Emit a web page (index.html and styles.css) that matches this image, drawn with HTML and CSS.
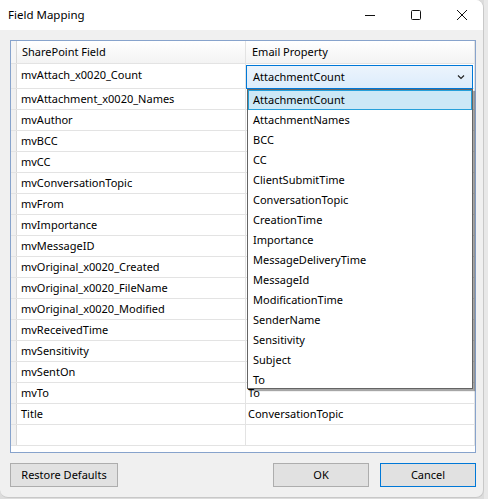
FILE: index.html
```html
<!DOCTYPE html>
<html>
<head>
<meta charset="utf-8">
<link rel="stylesheet" href="styles.css">
</head>
<body>
<div class="screen">
  <div class="window">
    <div class="titlebar">
      <div class="title">Field Mapping</div>
      <div class="controls">
        <span class="ctl"><svg width="12" height="12" viewBox="0 0 12 12"><path d="M1 6.5H11" stroke="#111" stroke-width="1"/></svg></span>
        <span class="ctl"><svg width="12" height="12" viewBox="0 0 12 12"><rect x="1.5" y="1.5" width="9" height="9" rx="1" fill="none" stroke="#111" stroke-width="1"/></svg></span>
        <span class="ctl"><svg width="12" height="12" viewBox="0 0 12 12"><path d="M1 1L11 11M11 1L1 11" stroke="#111" stroke-width="1"/></svg></span>
      </div>
    </div>
    <div class="content">
      <div class="grid">
        <div class="row header">
          <div class="rh"></div>
          <div class="c1">SharePoint Field</div>
          <div class="c2">Email Property</div>
        </div>
        <div class="row first">
          <div class="rh"></div>
          <div class="c1">mvAttach_x0020_Count</div>
          <div class="c2 combo-cell">
            <div class="combo">
              <span>AttachmentCount</span>
              <svg width="8" height="6" viewBox="0 0 8 6"><path d="M1 1.5L4 4.5L7 1.5" fill="none" stroke="#222" stroke-width="1.2"/></svg>
            </div>
          </div>
        </div>
        <div class="row"><div class="rh"></div><div class="c1">mvAttachment_x0020_Names</div><div class="c2"></div></div>
        <div class="row"><div class="rh"></div><div class="c1">mvAuthor</div><div class="c2"></div></div>
        <div class="row"><div class="rh"></div><div class="c1">mvBCC</div><div class="c2"></div></div>
        <div class="row"><div class="rh"></div><div class="c1">mvCC</div><div class="c2"></div></div>
        <div class="row"><div class="rh"></div><div class="c1">mvConversationTopic</div><div class="c2"></div></div>
        <div class="row"><div class="rh"></div><div class="c1">mvFrom</div><div class="c2"></div></div>
        <div class="row"><div class="rh"></div><div class="c1">mvImportance</div><div class="c2"></div></div>
        <div class="row"><div class="rh"></div><div class="c1">mvMessageID</div><div class="c2"></div></div>
        <div class="row"><div class="rh"></div><div class="c1">mvOriginal_x0020_Created</div><div class="c2"></div></div>
        <div class="row"><div class="rh"></div><div class="c1">mvOriginal_x0020_FileName</div><div class="c2"></div></div>
        <div class="row"><div class="rh"></div><div class="c1">mvOriginal_x0020_Modified</div><div class="c2"></div></div>
        <div class="row"><div class="rh"></div><div class="c1">mvReceivedTime</div><div class="c2"></div></div>
        <div class="row"><div class="rh"></div><div class="c1">mvSensitivity</div><div class="c2"></div></div>
        <div class="row"><div class="rh"></div><div class="c1">mvSentOn</div><div class="c2"></div></div>
        <div class="row"><div class="rh"></div><div class="c1">mvTo</div><div class="c2">To</div></div>
        <div class="row"><div class="rh"></div><div class="c1">Title</div><div class="c2">ConversationTopic</div></div>
        <div class="row"><div class="rh"></div><div class="c1"></div><div class="c2"></div></div>
        <div class="dropdown">
          <div class="item selected">AttachmentCount</div>
          <div class="item">AttachmentNames</div>
          <div class="item">BCC</div>
          <div class="item">CC</div>
          <div class="item">ClientSubmitTime</div>
          <div class="item">ConversationTopic</div>
          <div class="item">CreationTime</div>
          <div class="item">Importance</div>
          <div class="item">MessageDeliveryTime</div>
          <div class="item">MessageId</div>
          <div class="item">ModificationTime</div>
          <div class="item">SenderName</div>
          <div class="item">Sensitivity</div>
          <div class="item">Subject</div>
          <div class="item">To</div>
        </div>
      </div>
      <div class="buttons">
        <button class="btn restore">Restore Defaults</button>
        <div class="right">
          <button class="btn">OK</button>
          <button class="btn default">Cancel</button>
        </div>
      </div>
    </div>
  </div>
  <div class="strip"></div>
</div>
</body>
</html>
```
FILE: styles.css
```css
* { box-sizing: border-box; }
html, body { margin: 0; padding: 0; }
body {
  width: 488px;
  height: 499px;
  overflow: hidden;
  background: #dcdcdc;
  font-family: "Noto Sans", "Open Sans", sans-serif;
  font-size: 11px;
  color: #000;
}
.screen {
  display: flex;
  height: 499px;
}
.window {
  width: 484px;
  height: 498px;
  background: #f0f0f0;
  border: 1px solid #c8c8c8;
  border-top: none;
  border-left: none;
  border-radius: 0 8px 8px 8px;
  overflow: hidden;
  display: flex;
  flex-direction: column;
}
.strip {
  flex: 1;
  background: #e8e8e8;
}
.titlebar {
  height: 30px;
  background: #fff;
  display: flex;
  align-items: center;
  justify-content: space-between;
}
.title {
  padding-left: 8px;
  font-size: 11.5px;
  padding-bottom: 1px;
}
.controls {
  display: flex;
  margin-right: -2px;
}
.ctl {
  width: 46px;
  height: 30px;
  display: flex;
  align-items: center;
  justify-content: center;
}
.content {
  padding: 10px 9px 0 10px;
}
.grid {
  position: relative;
  width: 466px;
  height: 413px;
  border: 1px solid #87a3cc;
  background: #fff;
}
.row {
  display: flex;
  height: 21px;
  border-bottom: 1px solid #e3e3e3;
}
.row.first { height: 25px; }
.row.header {
  height: 23px;
  background: linear-gradient(#ffffff, #f3f3f3);
  border-bottom: 1px solid #e3e3e3;
}
.rh {
  width: 6px;
  background: #f0f0f0;
  border-right: 1px solid #d6d6d6;
}
.header .rh { background: #f5f5f5; }
.c1 {
  width: 229px;
  padding-left: 4px;
  border-right: 1px solid #e3e3e3;
  display: flex;
  align-items: center;
  white-space: nowrap;
  padding-bottom: 1px;
}
.c2 {
  flex: 1;
  padding-left: 2px;
  display: flex;
  align-items: center;
  border-right: 1px solid #e3e3e3;
  white-space: nowrap;
  padding-bottom: 1px;
}
.header .c1 { padding-left: 5px; }
.header .c2 { padding-left: 6px; }
.first .c1 { padding-bottom: 4px; }
.combo-cell { padding: 0; align-items: flex-start; }
.combo {
  margin-top: 1px;
  width: 227px;
  height: 24px;
  border: 1px solid #0078d7;
  background: linear-gradient(#ecf4fc, #dcecfc);
  display: flex;
  align-items: center;
  justify-content: space-between;
  padding: 0 7px 1px 6px;
}
.combo svg { margin-top: 1px; }
.dropdown {
  position: absolute;
  left: 236px;
  top: 48px;
  width: 226px;
  height: 300px;
  background: #fff;
  border: 1px solid #646464;
  box-shadow: 2px 2px 1px rgba(0,0,0,0.35);
}
.item {
  height: 20px;
  padding-left: 5px;
  display: flex;
  align-items: center;
  white-space: nowrap;
  padding-bottom: 1px;
}
.item.selected {
  background: #cce8f6;
  border: 1px solid #26a0da;
  padding-left: 4px;
}
.buttons {
  display: flex;
  justify-content: space-between;
  margin-top: 10px;
  width: 466px;
}
.right { display: flex; gap: 11px; }
.btn {
  font-family: inherit;
  font-size: 11px;
  color: #000;
  height: 24px;
  background: #e1e1e1;
  border: 1px solid #adadad;
  padding: 0 0 1px;
  margin: 0;
}
.restore { width: 108px; }
.right .btn { width: 96px; }
.btn.default { border-color: #0078d7; }
```
